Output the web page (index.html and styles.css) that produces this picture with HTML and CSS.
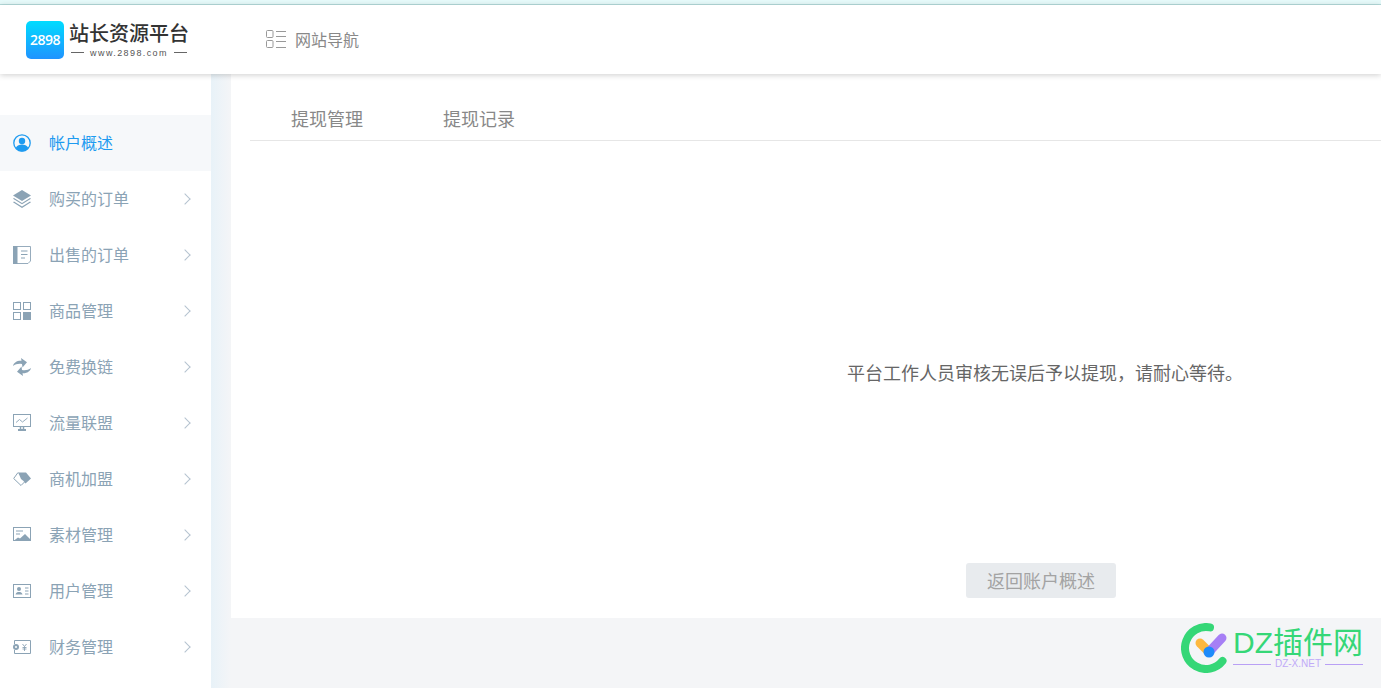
FILE: index.html
```html
<!DOCTYPE html>
<html>
	<head>
		<meta charset="UTF-8">
		<title>站长资源平台</title>
		<link rel="stylesheet" href="styles.css">
	</head>
	<body>
		<div class="top-strip"></div>
		<div class="header">
			<div class="logo">
				<div class="logo-mark">2898</div>
				<div class="logo-text">
					<div class="logo-name">站长资源平台</div>
					<div class="logo-url"><i></i><span>www.2898.com</span><i></i></div>
				</div>
			</div>
			<div class="site-nav">
				<svg width="21" height="19" viewBox="0 0 21 19" fill="none" stroke="#999" stroke-width="1">
					<rect x="0.5" y="0.5" width="6.5" height="7" rx="1"/>
					<rect x="0.5" y="10.5" width="6.5" height="7" rx="1"/>
					<path d="M10 1.5h10M10 6.5h10M10 11.5h10M10 17.5h10"/>
				</svg>
				<span>网站导航</span>
			</div>
		</div>

		<div class="page">
			<div class="sidebar">
				<div class="menu-item active">
					<svg class="menu-icon" viewBox="0 0 18 18">
						<circle cx="9" cy="9" r="8.2" fill="none" stroke="#1e9bf0" stroke-width="1.3"/>
						<circle cx="9" cy="7" r="3.2" fill="#1e9bf0"/>
						<path d="M2.6 14c1.6-2.6 3.8-3.4 6.4-3.4s4.8.8 6.4 3.4c-1.600 2.200-3.800 3.600-6.400 3.600s-4.800-1.400-6.400-3.600z" fill="#1e9bf0"/>
					</svg>
					<span class="menu-label">帐户概述</span>
				</div>
				<div class="menu-item">
					<svg class="menu-icon" viewBox="0 0 18 18" fill="#8ba3b5">
						<path d="M9 0l9 5.500L9 11 0 5.500z"/>
						<path d="M1 8L9 13l8-5 1 .7L9 14.300 0 8.700z"/>
						<path d="M1 11.500L9 16.500l8-5 1 .7L9 18 0 12.200z"/>
					</svg>
					<span class="menu-label">购买的订单</span>
					<span class="arrow"></span>
				</div>
				<div class="menu-item">
					<svg class="menu-icon" viewBox="0 0 18 18">
						<path d="M0 .5h17.500V15l-2.500 2.500H0z" fill="none" stroke="#8ba3b5" stroke-width="0.9"/>
						<rect x="0" y="0" width="4.500" height="18" fill="#8ba3b5"/>
						<path d="M8 5h6.500M8 8.500h6.500M8 12h4" stroke="#8ba3b5" stroke-width="1"/>
					</svg>
					<span class="menu-label">出售的订单</span>
					<span class="arrow"></span>
				</div>
				<div class="menu-item">
					<svg class="menu-icon" viewBox="0 0 18 18" fill="none" stroke="#8ba3b5">
						<rect x="0.500" y="0.500" width="7" height="7"/>
						<rect x="10.500" y="0.500" width="7" height="7"/>
						<rect x="0.500" y="10.500" width="7" height="7"/>
						<rect x="10" y="10" width="8" height="8" fill="#8ba3b5" stroke="none"/>
					</svg>
					<span class="menu-label">商品管理</span>
					<span class="arrow"></span>
				</div>
				<div class="menu-item">
					<svg class="menu-icon" viewBox="0 0 18 18" fill="#8ba3b5">
						<path d="M0 8C.8 4.500 4 2.500 8.500 2.800L8 0l6 4.300L9.500 9.500 9 6C5.500 5.500 2.500 6 0 8z"/>
						<path d="M18 10c-.8 3.500-4 5.500-8.500 5.200L10 18l-6-4.300L8.500 8.500 9 12c3.500.5 6.500 0 9-2z"/>
					</svg>
					<span class="menu-label">免费换链</span>
					<span class="arrow"></span>
				</div>
				<div class="menu-item">
					<svg class="menu-icon" viewBox="0 0 18 18" fill="none" stroke="#8ba3b5">
						<rect x="0.500" y="0.500" width="17" height="12"/>
						<path d="M3 8.500l3.500-3 3 2.500 5-4" stroke-width="0.9"/>
						<path d="M7.500 13v2M10.500 13v2" stroke-width="1.500"/>
						<rect x="5" y="15" width="8" height="2" fill="#8ba3b5" stroke="none"/>
					</svg>
					<span class="menu-label">流量联盟</span>
					<span class="arrow"></span>
				</div>
				<div class="menu-item">
					<svg class="menu-icon" viewBox="0 0 18 18">
						<path d="M5 2.500L.7 8.500 8 15.500l3.500-3.500" fill="none" stroke="#8ba3b5" stroke-width="1"/>
						<path d="M5 2.500h8l5 6-5.500 5-2-2.500L8 9 6.500 5.500z" fill="#8ba3b5"/>
					</svg>
					<span class="menu-label">商机加盟</span>
					<span class="arrow"></span>
				</div>
				<div class="menu-item">
					<svg class="menu-icon" viewBox="0 0 18 18">
						<rect x="0.500" y="1.500" width="17" height="13" fill="none" stroke="#8ba3b5"/>
						<path d="M3 5h7M3 8h4" stroke="#8ba3b5"/>
						<path d="M1 14.500l4-3 2 1 5-4.500 5 5v1.500z" fill="#8ba3b5"/>
					</svg>
					<span class="menu-label">素材管理</span>
					<span class="arrow"></span>
				</div>
				<div class="menu-item">
					<svg class="menu-icon" viewBox="0 0 18 18">
						<rect x="0.500" y="2.500" width="17" height="13" fill="none" stroke="#8ba3b5"/>
						<circle cx="6" cy="7" r="2" fill="#8ba3b5"/>
						<path d="M2.500 12.500c.5-2 2-2.500 3.500-2.500s3 .5 3.500 2.500z" fill="#8ba3b5"/>
						<path d="M12 6h3.500M12 9h3.500M12 12h3.500" stroke="#8ba3b5"/>
					</svg>
					<span class="menu-label">用户管理</span>
					<span class="arrow"></span>
				</div>
				<div class="menu-item">
					<svg class="menu-icon" viewBox="0 0 18 18">
						<path d="M1.500 6V2.500h16v13h-16V12" fill="none" stroke="#8ba3b5"/>
						<circle cx="3" cy="9" r="3" fill="#8ba3b5"/>
						<circle cx="3" cy="9" r="1" fill="#fff"/>
						<path d="M9.500 6l2 2.500 2-2.500M11.500 8.500V13M9.500 9.500h4M9.500 11h4" fill="none" stroke="#8ba3b5" stroke-width="0.900"/>
					</svg>
					<span class="menu-label">财务管理</span>
					<span class="arrow"></span>
				</div>
			</div>

			<div class="main">
				<div class="panel">
					<div class="tabs">
						<div class="tab">提现管理</div>
						<div class="tab">提现记录</div>
					</div>
					<div class="result">
						<p class="result-text">平台工作人员审核无误后予以提现，请耐心等待。</p>
						<div class="back-btn">返回账户概述</div>
					</div>
				</div>
			</div>
		</div>

		<div class="dz-mark">
			<svg width="50" height="50" viewBox="0 0 50 50" fill="none">
				<path d="M29 4.400A21 21 0 1 0 41.500 38" stroke="#35d777" stroke-width="8" stroke-linecap="round"/>
				<path d="M19 20l9 9" stroke="#fdb83f" stroke-width="9" stroke-linecap="round"/>
				<path d="M28 29l13-14" stroke="#a67ff5" stroke-width="9" stroke-linecap="round"/>
				<circle cx="28" cy="29" r="5.500" fill="#1e8bfa"/>
			</svg>
			<div class="dz-text">
				<div class="dz-name">DZ插件网</div>
				<div class="dz-url"><i></i><span>DZ-X.NET</span><i></i></div>
			</div>
		</div>
	</body>
</html>
```

FILE: styles.css
```css
* {
	margin: 0;
	padding: 0;
	box-sizing: border-box;
}

html, body {
	height: 688px;
	overflow: hidden;
}

body {
	position: relative;
	background: #f4f5f7;
	font-family: "Liberation Sans", "Noto Sans CJK SC", sans-serif;
}

.top-strip {
	height: 5px;
	background: #e6fafa;
	border-bottom: 1px solid #b5dcdc;
}

/*顶部*/
.header {
	position: relative;
	z-index: 2;
	display: flex;
	align-items: center;
	height: 69px;
	background: #fff;
	box-shadow: 0 1px 6px rgba(0, 0, 0, 0.2);
}

.logo {
	display: flex;
	align-items: center;
	width: 266px;
	padding-left: 26px;
}

.logo-mark {
	width: 38px;
	height: 38px;
	margin-right: 5px;
	border-radius: 5px;
	background: linear-gradient(#00dcff, #2093ff);
	color: #fff;
	font-family: "Open Sans", sans-serif;
	font-size: 14px;
	font-weight: 600;
	line-height: 38px;
	text-align: center;
	letter-spacing: -0.5px;
}

.logo-name {
	color: #333;
	font-size: 20px;
	font-weight: 500;
	line-height: 26px;
}

.logo-url {
	display: flex;
	align-items: center;
	justify-content: space-between;
	padding: 0 2px;
	color: #555;
	font-size: 9px;
	line-height: 12px;
	letter-spacing: 1.4px;
}

.logo-url i {
	width: 13px;
	height: 1px;
	background: #666;
}

.site-nav {
	display: flex;
	align-items: center;
	color: #888;
	font-size: 16px;
}

.site-nav span {
	margin-left: 8px;
	padding-bottom: 2px;
}

.page {
	display: flex;
	height: 614px;
}

/*左侧菜单*/
.sidebar {
	width: 211px;
	padding-top: 41px;
	background: #fff;
}

.menu-item {
	display: flex;
	align-items: center;
	height: 56px;
	padding-left: 13px;
	color: #8ba3b5;
	font-size: 16px;
}

.menu-item.active {
	background: #f6f8fa;
	color: #1e9bf0;
}

.menu-icon {
	width: 18px;
	height: 18px;
	flex: none;
}

.menu-label {
	margin-left: 18px;
	padding-bottom: 2px;
}

.arrow {
	width: 8px;
	height: 8px;
	margin-left: auto;
	margin-right: 22px;
	border-top: 1px solid #b5c3cf;
	border-right: 1px solid #b5c3cf;
	transform: rotate(45deg);
}

.main {
	flex: 1;
	padding-left: 20px;
	background: linear-gradient(to right, #e8f2f8 0, #f4f5f7 20px);
}

.panel {
	height: 544px;
	padding: 27px 0 0 19px;
	background: #fff;
}

/*选项卡*/
.tabs {
	display: flex;
	height: 40px;
	border-bottom: 1px solid #e6e6e6;
}

.tab {
	padding: 0 40px 0 41px;
	margin-right: -1px;
	color: #888;
	font-size: 18px;
	line-height: 38px;
}

.result {
	display: flex;
	flex-direction: column;
	align-items: center;
	padding: 218px 0 0 451px;
}

.result-text {
	padding-left: 8px;
	color: #666;
	font-size: 18px;
	line-height: 30px;
}

.back-btn {
	width: 150px;
	height: 35px;
	margin-top: 174px;
	border-radius: 3px;
	background: #e8ebee;
	color: #a3a3a3;
	font-size: 18px;
	line-height: 38px;
	text-align: center;
}

/*右下角水印*/
.dz-mark {
	position: absolute;
	right: 18px;
	bottom: 15px;
	display: flex;
	align-items: center;
}

.dz-text {
	margin: 2px 0 0 2px;
}

.dz-name {
	color: #35d777;
	font-size: 30px;
	line-height: 30px;
	white-space: nowrap;
}

.dz-url {
	display: flex;
	align-items: center;
	color: #c0aaf8;
	font-size: 10px;
	line-height: 12px;
}

.dz-url i {
	flex: 1;
	height: 1px;
	background: #b9a0f5;
}

.dz-url span {
	margin: 0 4px;
}
```
